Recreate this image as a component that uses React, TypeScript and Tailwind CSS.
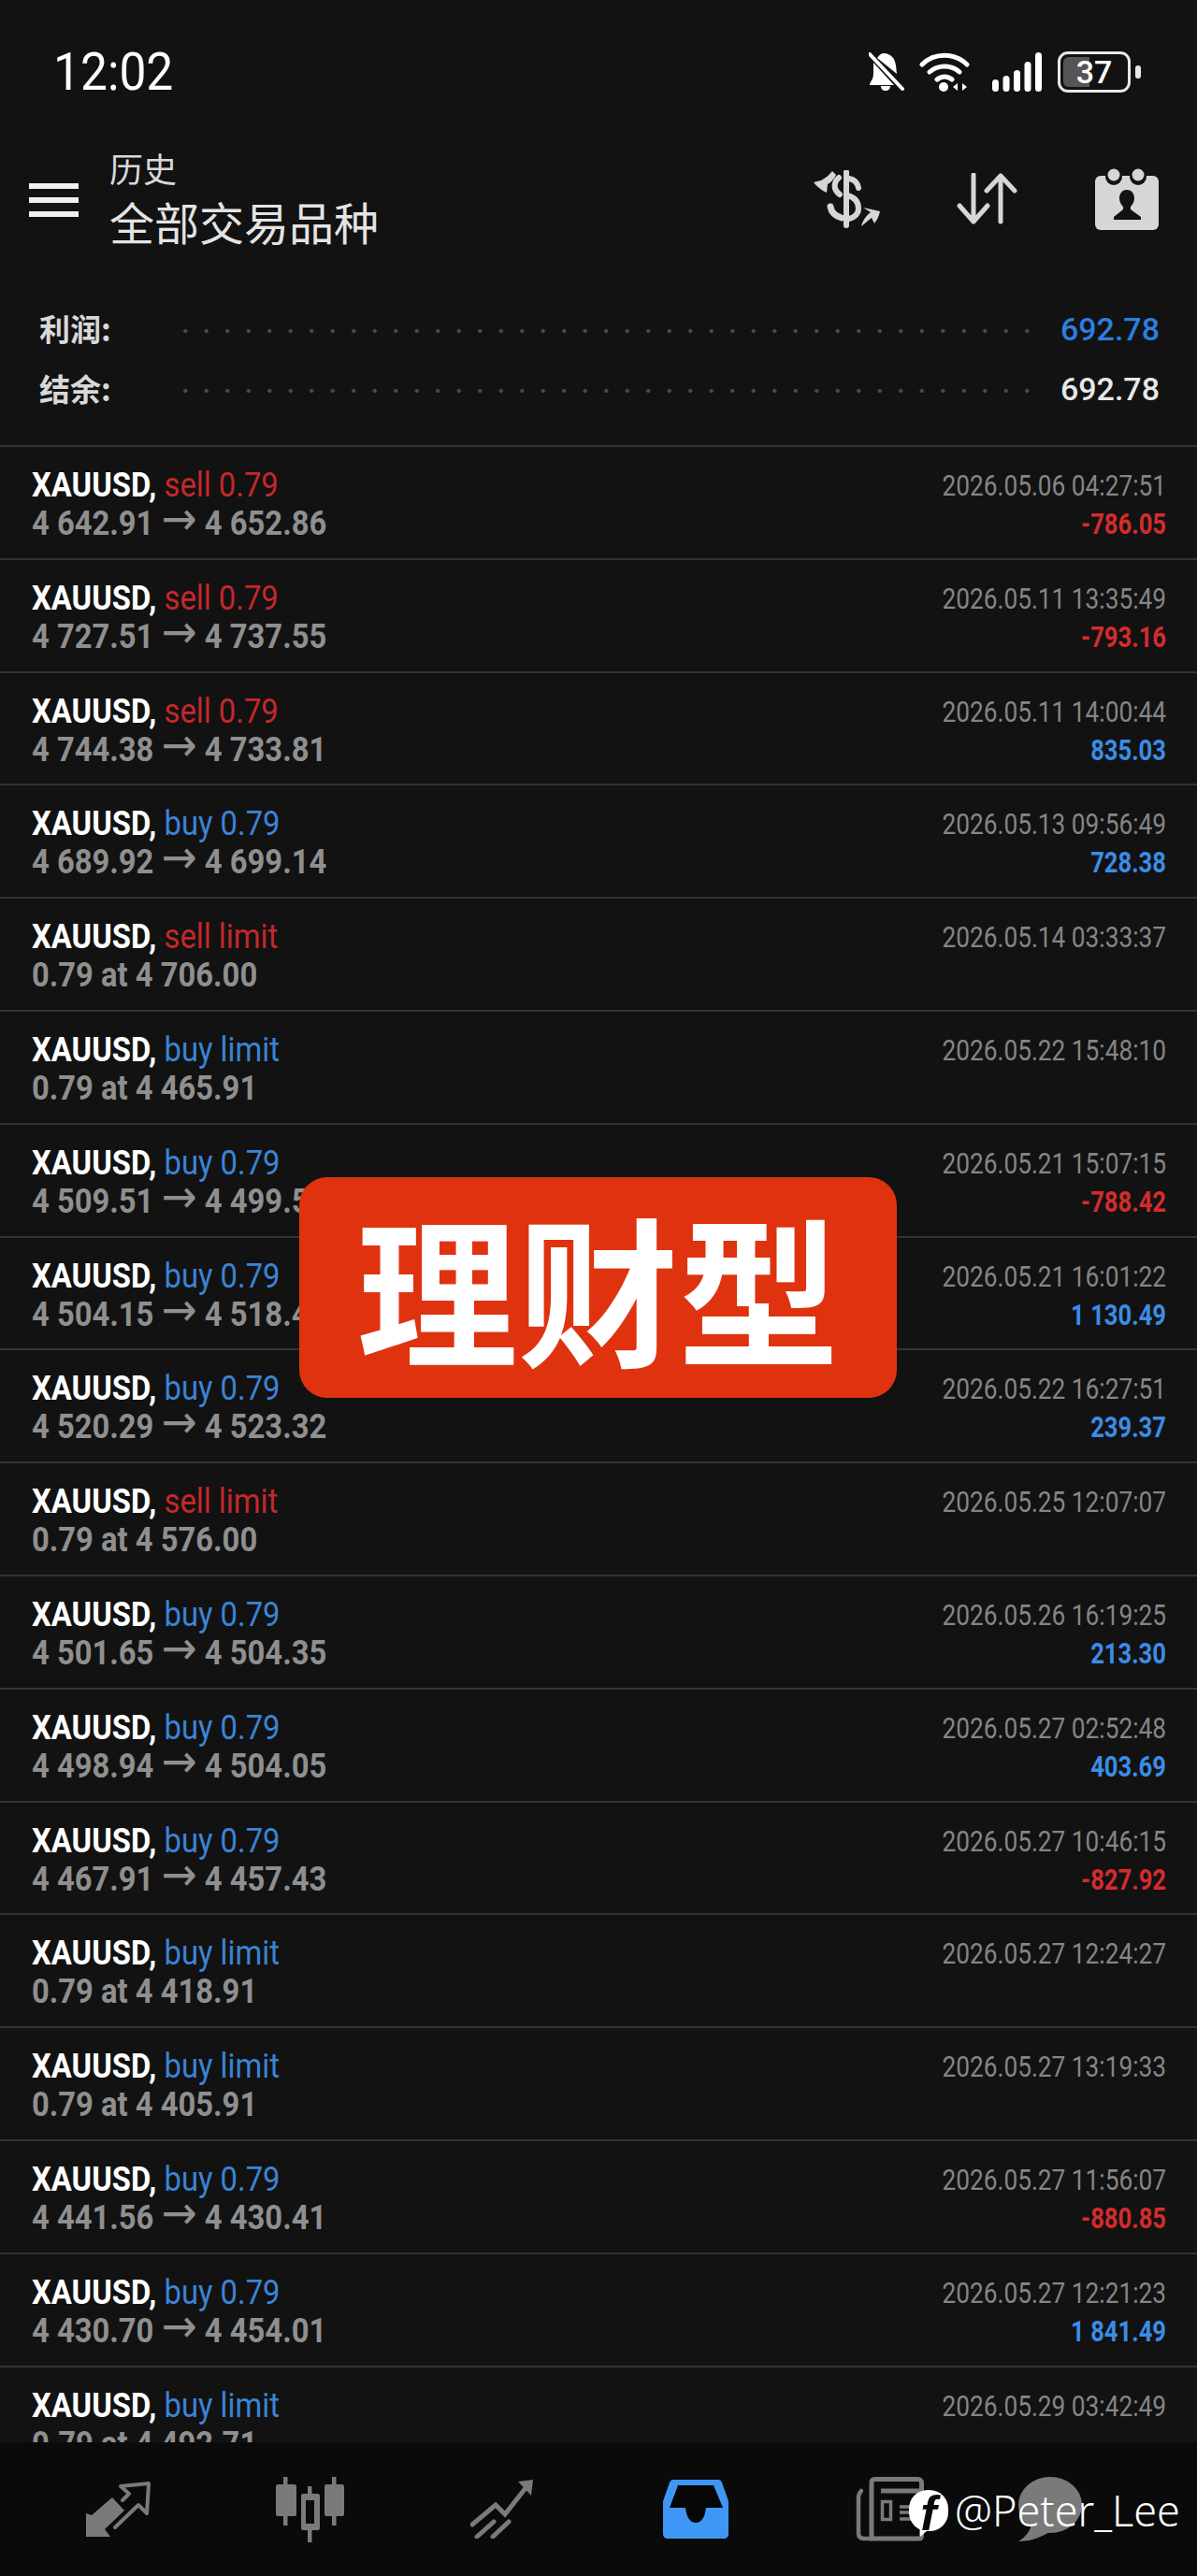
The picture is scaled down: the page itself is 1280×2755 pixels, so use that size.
import React from 'react';

type Trade = { side: string; color: 'sell' | 'buy'; prices: string; time: string; profit?: string };

const TRADES: Trade[] = [
  { side: 'sell 0.79', color: 'sell', prices: '4 642.91 → 4 652.86', time: '2026.05.06 04:27:51', profit: '-786.05' },
  { side: 'sell 0.79', color: 'sell', prices: '4 727.51 → 4 737.55', time: '2026.05.11 13:35:49', profit: '-793.16' },
  { side: 'sell 0.79', color: 'sell', prices: '4 744.38 → 4 733.81', time: '2026.05.11 14:00:44', profit: '835.03' },
  { side: 'buy 0.79', color: 'buy', prices: '4 689.92 → 4 699.14', time: '2026.05.13 09:56:49', profit: '728.38' },
  { side: 'sell limit', color: 'sell', prices: '0.79 at 4 706.00', time: '2026.05.14 03:33:37' },
  { side: 'buy limit', color: 'buy', prices: '0.79 at 4 465.91', time: '2026.05.22 15:48:10' },
  { side: 'buy 0.79', color: 'buy', prices: '4 509.51 → 4 499.53', time: '2026.05.21 15:07:15', profit: '-788.42' },
  { side: 'buy 0.79', color: 'buy', prices: '4 504.15 → 4 518.46', time: '2026.05.21 16:01:22', profit: '1 130.49' },
  { side: 'buy 0.79', color: 'buy', prices: '4 520.29 → 4 523.32', time: '2026.05.22 16:27:51', profit: '239.37' },
  { side: 'sell limit', color: 'sell', prices: '0.79 at 4 576.00', time: '2026.05.25 12:07:07' },
  { side: 'buy 0.79', color: 'buy', prices: '4 501.65 → 4 504.35', time: '2026.05.26 16:19:25', profit: '213.30' },
  { side: 'buy 0.79', color: 'buy', prices: '4 498.94 → 4 504.05', time: '2026.05.27 02:52:48', profit: '403.69' },
  { side: 'buy 0.79', color: 'buy', prices: '4 467.91 → 4 457.43', time: '2026.05.27 10:46:15', profit: '-827.92' },
  { side: 'buy limit', color: 'buy', prices: '0.79 at 4 418.91', time: '2026.05.27 12:24:27' },
  { side: 'buy limit', color: 'buy', prices: '0.79 at 4 405.91', time: '2026.05.27 13:19:33' },
  { side: 'buy 0.79', color: 'buy', prices: '4 441.56 → 4 430.41', time: '2026.05.27 11:56:07', profit: '-880.85' },
  { side: 'buy 0.79', color: 'buy', prices: '4 430.70 → 4 454.01', time: '2026.05.27 12:21:23', profit: '1 841.49' },
  { side: 'buy limit', color: 'buy', prices: '0.79 at 4 492.71', time: '2026.05.29 03:42:49' },
];

const StatusIcons = () => (
  <div className="flex items-center">
    <svg width="38" height="42" viewBox="0 0 38 42" fill="#fff">
      <path d="M16 1c7 0 12 5 13 13l1 9L9 6c2-3 4-5 7-5zM5 11l22 24H1c0-2 1-3 2-5 2-3 2-6 2-10v-9zM13 36h10c0 3-2 5-5 5s-5-2-5-5z" />
      <path d="M2 4l33 36" stroke="#121212" strokeWidth="2" fill="none" />
      <path d="M1 2l35 37" stroke="#fff" strokeWidth="4" strokeLinecap="round" fill="none" />
    </svg>
    <svg className="ml-[16px]" width="56" height="44" viewBox="0 0 56 44" fill="none" stroke="#fff" strokeWidth="5" strokeLinecap="round">
      <path d="M3 14C16 1 38 1 51 14" />
      <path d="M11 22c9-8 23-8 32 0" />
      <path d="M19 30c5-4 11-4 16 0" />
      <circle cx="26" cy="38" r="5" fill="#fff" stroke="none" />
      <path d="M41 34l-5 4 5 4zM46 34l5 4-5 4z" fill="#fff" stroke="none" />
    </svg>
    <svg className="ml-[22px]" width="54" height="44" viewBox="0 0 54 44" fill="#fff">
      <rect x="0" y="30" width="7" height="13" rx="3.5" />
      <rect x="11.5" y="26" width="7" height="17" rx="3.5" />
      <rect x="23" y="20" width="7" height="23" rx="3.5" />
      <rect x="34.5" y="11" width="7" height="32" rx="3.5" />
      <rect x="46" y="1" width="7" height="42" rx="3.5" />
    </svg>
    <div className="relative ml-[16px] flex h-[44px] w-[78px] items-center justify-center overflow-hidden rounded-[11px] border-[3px] border-[#e8e8e8]">
      <div className="absolute inset-y-[3px] left-[3px] w-[28px] rounded-l-[6px] bg-[#555555]" />
      <span className="relative font-['Roboto',sans-serif] text-[34px] font-medium leading-none text-white">37</span>
    </div>
    <div className="ml-[5px] h-[14px] w-[6px] rounded-full bg-[#e8e8e8]" />
  </div>
);

const DollarSwapIcon = () => (
  <svg width="72" height="62" viewBox="0 0 72 62" fill="none" stroke="#d6d6d6" strokeWidth="6" strokeLinecap="round">
    <path d="M35 2v57" />
    <path d="M48 19c-1-6-5-9-10-10" />
    <path d="M27 8c-5 4-7 12 1 18" />
    <path d="M36 27c8 2 12 7 12 14 0 6-5 10-10 11" />
    <path d="M18 39c1 6 5 10 12 12" strokeWidth="7" />
    <path d="M20 1C17 5 13 8 8 11l-8 2c3 4 9 9 14 11l1-9c4-2 7-6 9-10z" fill="#d6d6d6" stroke="none" />
    <path d="M51 60c2-7 5-11 10-15l-8-5 18 4c-1 5-3 9-6 13l-3-6c-4 3-7 6-11 9z" fill="#d6d6d6" stroke="none" />
  </svg>
);

const SortIcon = () => (
  <svg width="66" height="56" viewBox="0 0 66 56" fill="none" stroke="#d6d6d6" strokeWidth="5" strokeLinecap="round" strokeLinejoin="round">
    <path d="M18 2v50M3 35l15 17 15-17" />
    <path d="M47 52V3M32 19L47 3l15 16" />
  </svg>
);

const CalendarIcon = () => (
  <svg width="68" height="66" viewBox="0 0 68 66">
    <rect x="0" y="8" width="68" height="58" rx="6" fill="#d6d6d6" />
    <circle cx="20" cy="9" r="9" fill="#121212" />
    <circle cx="46" cy="9" r="9" fill="#121212" />
    <circle cx="20" cy="7" r="6.5" fill="#d6d6d6" />
    <circle cx="46" cy="7" r="6.5" fill="#d6d6d6" />
    <path d="M34 23c5 0 8 4 8 9 0 4-2 7-4 9v3l11 8v3H20v-3l10-8v-3c-2-2-4-5-4-9 0-5 3-9 8-9z" fill="#121212" />
  </svg>
);

const NavIcons = () => (
  <div className="grid h-full grid-cols-[90px_72px_133px_73px_135px_67px_139px_70px_136px_73px_101px_68px] items-center">
    <div />
    <svg width="72" height="62" viewBox="0 0 72 62">
      <path d="M2 60V35l6 2L30 18l13 14-21 20 6 8z" fill="#7a7a7a" />
      <path d="M33 50L58 26l9 9 2-32-30 3 9 8-7 7" fill="none" stroke="#7a7a7a" strokeWidth="4" strokeLinejoin="round" strokeLinecap="round" />
    </svg>
    <div />
    <svg width="73" height="70" viewBox="0 0 73 70" fill="#7a7a7a">
      <path d="M8 0h4.500v8H20c1 0 2 1 2 2v30c0 1-1 2-2 2h-7.500v10H8V42H2c-1 0-2-1-2-2V10c0-1 1-2 2-2h6z" />
      <path d="M60 0h4.500v8H71c1 0 2 1 2 2v30c0 1-1 2-2 2h-6.500v10H60V42h-6c-1 0-2-1-2-2V10c0-1 1-2 2-2h6z" />
      <path
        d="M34 10h4.500v8H45c1 0 2 1 2 2v35c0 1-1 2-2 2h-6.500v13H34V57h-5c-1 0-2-1-2-2V20c0-1 1-2 2-2h5zM32 25v25h9V25z"
        fillRule="evenodd"
      />
    </svg>
    <div />
    <svg width="67" height="63" viewBox="0 0 67 63" fill="none" stroke="#7a7a7a" strokeWidth="5" strokeLinecap="round">
      <path d="M2 48l25-21 10 10L59 9" />
      <path d="M51 2l16-2-2 17z" fill="#7a7a7a" stroke="none" />
      <path d="M7 61l18-16M24 61l17-16" />
    </svg>
    <div />
    <svg width="70" height="63" viewBox="0 0 70 63">
      <path d="M11 0h48c2 0 3 1 4 3l7 20v35c0 3-2 5-5 5H5c-3 0-5-2-5-5V23L7 3c1-2 2-3 4-3z" fill="#3f97f5" />
      <path d="M16 6h38l10 24H46c-1 10-5 16-11 16s-10-6-11-16H7z" fill="#060606" />
    </svg>
    <div />
    <svg width="73" height="69" viewBox="0 0 73 69" fill="none" stroke="#7a7a7a">
      <path d="M17 66V6c0-2 1-3.500 3.500-3.500h46c2.500 0 4 1.500 4 3.500v57c0 2-1 3-3 3z" strokeWidth="5" />
      <path d="M6 15C4 17 3 19 3 22v38c0 4 2 6 6 6h8" strokeWidth="4.500" strokeLinecap="round" />
      <path d="M27 15h41" strokeWidth="5" />
      <rect x="28.500" y="26.500" width="9" height="19" strokeWidth="3.500" />
      <path d="M47 32h12M47 38h12M47 45h12" strokeWidth="3.500" />
    </svg>
    <div />
    <svg width="68" height="69" viewBox="0 0 68 69" fill="#7a7a7a">
      <ellipse cx="34" cy="30" rx="34" ry="30" />
      <path d="M14 48c0 9-6 16-14 21 12 0 24-4 33-10z" />
    </svg>
  </div>
);

const Row = ({ t }: { t: Trade }) => (
  <div className="relative h-[120.8px] shrink-0 border-t-2 border-[#333333] pt-[21px] font-['Roboto',sans-serif] whitespace-nowrap">
    <div className="flex justify-between pl-[34px] pr-[33px]">
      <div className="w-[600px]">
        <div className="h-[41px] w-[600px] origin-left scale-x-[0.91] text-[36px] leading-[41px]">
          <span className="font-bold text-white">XAUUSD,</span>{' '}
          <span className={t.color === 'sell' ? 'text-[#c4282a]' : 'text-[#3b84d6]'}>{t.side}</span>
        </div>
        <div className="h-[41px] w-[600px] origin-left scale-x-[0.91] text-[36px] font-bold leading-[41px] text-[#8f8f8f]">
          {t.prices.split('→').map((part, i) => (
            <React.Fragment key={part}>
              {i > 0 && <span className="font-['DejaVu_Sans',sans-serif] text-[50px] font-normal leading-[0]">→</span>}
              {part}
            </React.Fragment>
          ))}
        </div>
      </div>
      <div className="w-[400px] text-right">
        <div className="h-[41px] w-[400px] origin-right scale-x-[0.82] text-[32px] leading-[41px] text-[#858585]">{t.time}</div>
        {t.profit && (
          <div
            className={`h-[41px] w-[400px] origin-right scale-x-[0.8] text-[32px] font-bold leading-[41px] ${
              t.profit.startsWith('-') ? 'text-[#d42c2c]' : 'text-[#3b8de6]'
            }`}
          >
            {t.profit}
          </div>
        )}
      </div>
    </div>
  </div>
);

const Summary = ({ label, value, valueClass }: { label: string; value: string; valueClass: string }) => (
  <div className="flex h-[64px] items-center pl-[42px] pr-[40px]">
    <span className="w-[145px] font-['Noto_Sans_CJK_SC',sans-serif] text-[33px] font-bold leading-none text-[#d8d8d8]">{label}</span>
    <div className="mt-[6px] h-[6px] w-[925px] bg-[radial-gradient(circle,#4a4a4a_1.8px,transparent_2.4px)] bg-[length:22.5px_6px]" />
    <span className={`ml-auto mt-[2px] font-['Roboto',sans-serif] text-[34px] font-medium leading-none ${valueClass}`}>{value}</span>
  </div>
);

export default function App() {
  return (
    <div className="relative flex h-[2755px] w-[1280px] flex-col overflow-hidden bg-[#121212]">
      <div className="flex h-[476px] shrink-0 flex-col">
        <div className="flex items-center justify-between pl-[57px] pr-[60px] pt-[53px]">
          <span className="origin-left scale-x-[0.92] font-['Roboto',sans-serif] text-[56px] leading-[48px] text-white">12:02</span>
          <StatusIcons />
        </div>

        <div className="mt-[56px] flex items-center">
          <div className="ml-[31px] mt-[3px] flex w-[53px] flex-col gap-[9px]">
            <div className="h-[6px] bg-[#f0f0f0]" />
            <div className="h-[6px] bg-[#f0f0f0]" />
            <div className="h-[6px] bg-[#f0f0f0]" />
          </div>
          <div className="ml-[33px] font-['Noto_Sans_CJK_SC',sans-serif]">
            <div className="text-[36px] leading-[44px] text-[#d8d8d8]">历史</div>
            <div className="mt-[3px] text-[48px] leading-[64px] text-[#e4e4e4]">全部交易品种</div>
          </div>
          <div className="ml-auto mr-[41px] flex items-center">
            <DollarSwapIcon />
            <div className="ml-[81px]"><SortIcon /></div>
            <div className="ml-[82px]"><CalendarIcon /></div>
          </div>
        </div>

        <div className="mt-[51px]">
          <Summary label="利润:" value="692.78" valueClass="text-[#2b7fe0]" />
          <Summary label="结余:" value="692.78" valueClass="text-[#e8e8e8]" />
        </div>
      </div>

      <div className="flex min-h-0 flex-1 flex-col overflow-hidden">
        {TRADES.map((t) => (
          <Row key={t.time} t={t} />
        ))}
      </div>

      <div className="h-[143px] shrink-0 bg-[#0a0a0a]">
        <NavIcons />
      </div>

      {/* video overlay */}
      <div className="absolute left-[320px] top-[1259px] flex h-[236px] w-[639px] items-center justify-center rounded-[30px] bg-[#df3310]">
        <span className="mb-[6px] font-['Noto_Sans_CJK_SC',sans-serif] text-[172px] font-bold leading-none text-white">理财型</span>
      </div>

      {/* watermark */}
      <div className="absolute left-[972px] top-[2663px] flex items-start">
        <div className="relative flex h-[44px] w-[42px] items-center justify-center rounded-[20px] bg-white">
          <svg className="absolute left-[12px] top-[36px]" width="16" height="14" viewBox="0 0 16 14" fill="#fff">
            <path d="M0 0h16L0 14z" />
          </svg>
          <span className="relative mt-[6px] font-['Liberation_Sans',sans-serif] text-[52px] font-bold italic leading-none text-[#0a0a0a]">f</span>
        </div>
        <span className="ml-[7px] font-['Noto_Sans',sans-serif] text-[45px] font-light leading-[44px] text-white">@Peter_Lee</span>
      </div>
    </div>
  );
}
